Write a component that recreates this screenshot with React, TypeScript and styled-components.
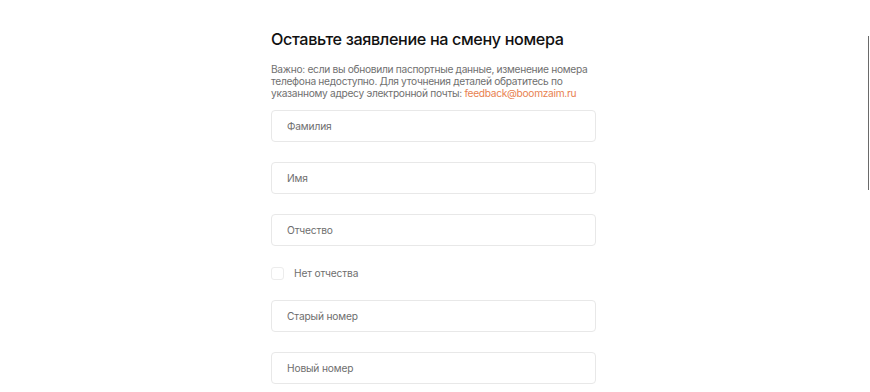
import * as React from "react";
import styled, { createGlobalStyle } from "styled-components";

const GlobalStyle = createGlobalStyle`
  html, body {
    margin: 0;
    padding: 0;
    background: #ffffff;
    font-family: Inter, "Noto Sans", sans-serif;
    overflow: hidden;
  }
`;

const Page = styled.div`
  display: flex;
  justify-content: center;
  padding: 29px 0 0 0;
  width: 870px;
  height: 392px;
  box-sizing: border-box;
`;

const Form = styled.form`
  width: 325px;
  margin-left: -3px;
  display: flex;
  flex-direction: column;
`;

const Title = styled.h1`
  margin: 0;
  font-size: 16.2px;
  font-weight: 500;
  letter-spacing: -0.37px;
  line-height: 20px;
  color: #111111;
`;

const Note = styled.p`
  margin: 14px 0 11px 0;
  font-size: 10.2px;
  letter-spacing: -0.3px;
  line-height: 12px;
  color: #707070;
`;

const Mail = styled.a`
  color: #e8814f;
  text-decoration: none;
`;

const Fields = styled.div`
  display: flex;
  flex-direction: column;
  gap: 20px;
`;

const Input = styled.input`
  height: 32px;
  box-sizing: border-box;
  border: 1px solid #e8e8e8;
  border-radius: 4px;
  padding: 0 15px;
  font-family: inherit;
  font-size: 10.2px;
  letter-spacing: -0.15px;
  color: #222;
  outline: none;
  &::placeholder {
    color: #6e6e6e;
  }
`;

const CheckRow = styled.label`
  display: flex;
  align-items: center;
  gap: 10px;
  height: 14px;
  font-size: 10.2px;
  letter-spacing: -0.15px;
  color: #6e6e6e;
  margin: 0;
`;

const Box = styled.span`
  width: 13px;
  height: 13px;
  box-sizing: border-box;
  border: 1px solid #ececec;
  border-radius: 3px;
`;

const ScrollThumb = styled.div`
  position: fixed;
  right: 1px;
  top: 36px;
  width: 1px;
  height: 154px;
  background: #6a6a6a;
`;

export default function App() {
  return (
    <>
      <GlobalStyle />
      <Page>
        <Form>
          <Title>Оставьте заявление на смену номера</Title>
          <Note>
            Важно: если вы обновили паспортные данные, изменение номера
            телефона недоступно. Для уточнения деталей обратитесь по
            указанному адресу электронной почты:{" "}
            <Mail href="#">feedback@boomzaim.ru</Mail>
          </Note>
          <Fields>
            <Input placeholder="Фамилия" />
            <Input placeholder="Имя" />
            <Input placeholder="Отчество" />
            <CheckRow>
              <Box />
              Нет отчества
            </CheckRow>
            <Input placeholder="Старый номер" />
            <Input placeholder="Новый номер" />
          </Fields>
        </Form>
      </Page>
      <ScrollThumb />
    </>
  );
}
